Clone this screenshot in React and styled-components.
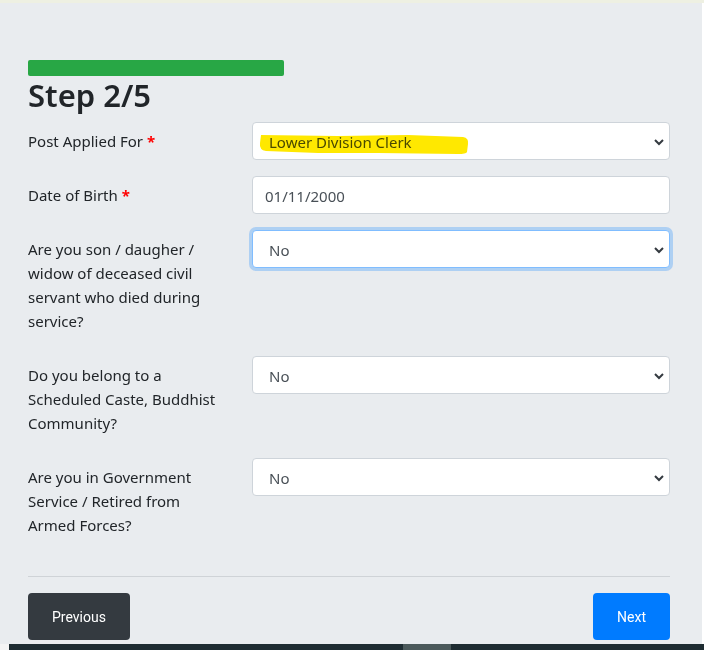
import React from 'react';
import styled, { createGlobalStyle } from 'styled-components';

const GlobalStyle = createGlobalStyle`
  * { box-sizing: border-box; }
  body {
    margin: 0;
    background: #e9ecef;
    font-family: 'Noto Sans', 'Open Sans', sans-serif;
    color: #212529;
  }
`;

const Page = styled.div`
  min-height: 650px;
  display: flex;
  flex-direction: column;
  border-top: 3px solid #eef0e2;
`;

const Body = styled.div`
  flex: 1;
  display: flex;
`;

const Main = styled.main`
  flex: 1;
  display: flex;
  flex-direction: column;
  padding: 57px 32px 0 28px;
`;

const Edge = styled.div`
  width: 2px;
  background: #ffffff;
`;

const Progress = styled.div`
  width: 256px;
  height: 16px;
  background: #28a745;
  border-radius: 2px;
`;

const Title = styled.h2`
  margin: 1px 0 8px;
  font-size: 31px;
  font-weight: 600;
  line-height: 37px;
  color: #212529;
`;

const Row = styled.div`
  display: grid;
  grid-template-columns: 194px 1fr;
  column-gap: 30px;
  margin-bottom: 16px;
  align-items: start;
`;

const Label = styled.label`
  padding: 7px 0;
  font-size: 15px;
  line-height: 24px;
  color: #212529;
`;

const Req = styled.span`
  color: #ff0000;
  font-weight: 700;
`;

const Field = styled.div`
  position: relative;
  height: 38px;
  background: #fff;
  border: 1px solid ${p => (p.$focus ? '#80bdff' : '#ced4da')};
  border-radius: 4px;
  box-shadow: ${p => (p.$focus ? '0 0 0 3px rgba(0,123,255,.25)' : 'none')};
`;

const Select = styled.select`
  appearance: none;
  width: 100%;
  height: 100%;
  border: 0;
  outline: 0;
  background: transparent;
  padding: 1px 30px 0 16px;
  font-family: inherit;
  font-size: 15px;
  color: #495057;
`;

const Input = styled.input`
  width: 100%;
  height: 100%;
  border: 0;
  outline: 0;
  background: transparent;
  padding: 1px 12px 0;
  font-family: inherit;
  font-size: 15px;
  color: #495057;
`;

const Chevron = styled.svg`
  position: absolute;
  right: 4px;
  top: 14px;
  pointer-events: none;
`;

const Marker = styled.svg`
  position: absolute;
  left: 5px;
  top: 10px;
  mix-blend-mode: multiply;
  pointer-events: none;
`;

const Rule = styled.hr`
  width: 100%;
  margin: 16px 0;
  border: 0;
  border-top: 1px solid #cfd3d7;
`;

const Actions = styled.div`
  display: flex;
  justify-content: space-between;
`;

const Button = styled.button`
  height: 47px;
  padding: 0 24px;
  border: 0;
  border-radius: 4px;
  font-family: 'Liberation Sans Narrow', 'Roboto', sans-serif;
  font-size: 14px;
  color: #fff;
  background: ${p => (p.$primary ? '#007bff' : '#343a40')};
`;

const Taskbar = styled.div`
  height: 6px;
  display: flex;
  background: #1e2c32;
`;

const TaskGap = styled.div`
  width: 9px;
  background: #f4f4f4;
`;

const TaskItem = styled.div`
  width: 48px;
  margin-left: 394px;
  background: #4b595b;
`;

function Caret() {
  return (
    <Chevron width="12" height="10" viewBox="0 0 12 10">
      <path d="M2 3l4 4 4-4" fill="none" stroke="#343a40" strokeWidth="2" />
    </Chevron>
  );
}

function SelectField({ value, focus, marker }) {
  return (
    <Field $focus={focus}>
      <Select defaultValue={value}>
        <option>{value}</option>
      </Select>
      {marker && (
        <Marker width="212" height="24" viewBox="0 0 212 24">
          <path
            d="M3 2 L80 3 L150 2 L205 4 Q211 5 210 11 L209 19 Q208 21 200 21 L120 20 L60 20 L8 18 Q1 17 2 10 Z"
            fill="#ffe800"
          />
        </Marker>
      )}
      <Caret />
    </Field>
  );
}

const rows = [
  { label: 'Are you son / daugher / widow of deceased civil servant who died during service?', focus: true },
  { label: 'Do you belong to a Scheduled Caste, Buddhist Community?' },
  { label: 'Are you in Government Service / Retired from Armed Forces?' },
];

export default function App() {
  return (
    <>
      <GlobalStyle />
      <Page>
        <Body>
          <Main>
            <Progress />
            <Title>Step 2/5</Title>
            <Row>
              <Label>Post Applied For <Req>*</Req></Label>
              <SelectField value="Lower Division Clerk" marker />
            </Row>
            <Row>
              <Label>Date of Birth <Req>*</Req></Label>
              <Field>
                <Input defaultValue="01/11/2000" />
              </Field>
            </Row>
            {rows.map(r => (
              <Row key={r.label}>
                <Label>{r.label}</Label>
                <SelectField value="No" focus={r.focus} />
              </Row>
            ))}
            <Rule />
            <Actions>
              <Button>Previous</Button>
              <Button $primary>Next</Button>
            </Actions>
          </Main>
          <Edge />
        </Body>
        <Taskbar>
          <TaskGap />
          <TaskItem />
        </Taskbar>
      </Page>
    </>
  );
}
